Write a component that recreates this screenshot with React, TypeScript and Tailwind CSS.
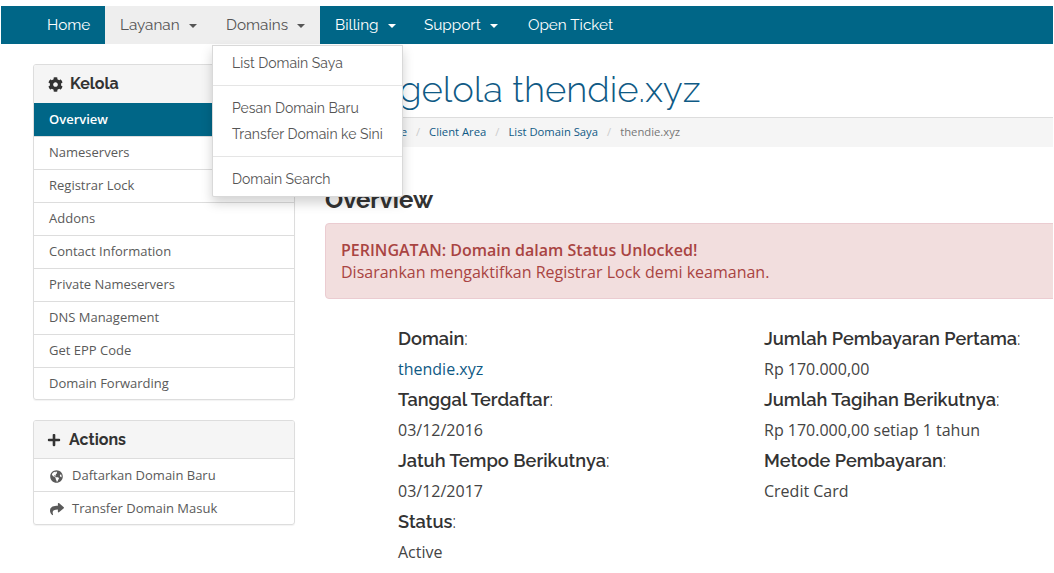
import { FaCog, FaGlobeAmericas, FaPlus, FaShare } from 'react-icons/fa';

const Caret = () => (
	<span className="ml-[9px] inline-block border-x-4 border-t-4 border-x-transparent border-t-current align-middle" />
);

const manageLinks = [
	'Nameservers',
	'Registrar Lock',
	'Addons',
	'Contact Information',
	'Private Nameservers',
	'DNS Management',
	'Get EPP Code',
	'Domain Forwarding',
];

const leftDetails = [
	['Domain', 'thendie.xyz'],
	['Tanggal Terdaftar', '03/12/2016'],
	['Jatuh Tempo Berikutnya', '03/12/2017'],
	['Status', 'Active'],
];

const rightDetails = [
	['Jumlah Pembayaran Pertama', 'Rp 170.000,00'],
	['Jumlah Tagihan Berikutnya', 'Rp 170.000,00 setiap 1 tahun'],
	['Metode Pembayaran', 'Credit Card'],
];

const heading = "font-['Raleway','Lato','Liberation_Sans',sans-serif]";

const Details = ({ rows }: { rows: string[][] }) => (
	<div className="flex flex-col">
		{rows.map(([label, value]) => (
			<div key={label}>
				<div className={`${heading} h-[30px] text-[18.2px] leading-[30px] font-semibold text-[#333]`}>
					{label}
					<span className="font-normal">:</span>
				</div>
				<div
					className={`h-[31px] text-[16px] leading-[31px] ${label === 'Domain' ? 'text-[#0f5a85]' : 'text-[#444]'}`}
				>
					{value}
				</div>
			</div>
		))}
	</div>
);

const App = () => {
	return (
		<div className="relative h-[573px] w-[1053px] overflow-hidden bg-white pt-[6px] font-['Open_Sans',sans-serif] text-[#333]">
			<nav className={`${heading} ml-[1px] flex h-[38px] w-[1052px] bg-[#006687] pl-[31px] text-[15.3px] leading-[38px] text-white`}>
				<a className="w-[73px] pl-[15px]">Home</a>
				<a className="w-[106px] bg-[#eeeeee] pl-[15px] text-[#555]">
					Layanan
					<Caret />
				</a>
				<a className="w-[109px] bg-[#eeeeee] pl-[15px] text-[#555]">
					Domains
					<Caret />
				</a>
				<a className="w-[89px] pl-[15px]">
					Billing
					<Caret />
				</a>
				<a className="w-[104px] pl-[15px]">
					Support
					<Caret />
				</a>
				<a className="pl-[15px]">Open Ticket</a>
			</nav>

			<div className="flex pt-[20px] pl-[33px]">
				<aside className="flex w-[262px] shrink-0 flex-col gap-[20px] text-[13px] text-[#5a5a5a]">
					<div className="overflow-hidden rounded-[3px] border border-[#ddd] shadow-[0_1px_1px_rgba(0,0,0,0.05)]">
						<div className={`${heading} flex h-[38px] items-center gap-[7px] bg-[#f5f5f5] pl-[14px] text-[16px] font-bold text-[#333]`}>
							<FaCog size={15} />
							Kelola
						</div>
						<div className="flex h-[33px] items-center bg-[#006687] pl-[15px] font-semibold text-white">Overview</div>
						{manageLinks.map((link) => (
							<div key={link} className="flex h-[33px] items-center border-t border-[#ddd] pl-[15px] last:h-[32px]">
								{link}
							</div>
						))}
					</div>
					<div className="overflow-hidden rounded-[3px] border border-[#ddd] shadow-[0_1px_1px_rgba(0,0,0,0.05)]">
						<div className={`${heading} flex h-[37px] items-center gap-[8px] bg-[#f5f5f5] pl-[13px] text-[16px] font-bold text-[#333]`}>
							<FaPlus size={14} />
							Actions
						</div>
						<div className="flex h-[33px] items-center gap-[9px] border-t border-[#ddd] pt-[2px] pl-[16px]">
							<FaGlobeAmericas size={13} />
							Daftarkan Domain Baru
						</div>
						<div className="flex h-[33px] items-center gap-[8px] border-t border-[#ddd] pt-[2px] pl-[16px]">
							<FaShare size={14} />
							Transfer Domain Masuk
						</div>
					</div>
				</aside>

				<main className="mt-[1px] ml-[30px] w-[760px] shrink-0">
					<h1 className={`${heading} h-[52px] text-[36.5px] leading-[50px] font-light text-[#0f5a85]`}>
						Mengelola thendie.xyz
					</h1>
					<div className="flex h-[30px] items-center gap-[9px] border-t border-[#ddd] bg-[#f5f5f5] pl-[16px] text-[11.25px]">
						<span className="text-[#0f5a85]">Portal Home</span>
						<span className="text-[#ccc]">/</span>
						<span className="text-[#0f5a85]">Client Area</span>
						<span className="text-[#ccc]">/</span>
						<span className="text-[#0f5a85]">List Domain Saya</span>
						<span className="text-[#ccc]">/</span>
						<span className="text-[#777]">thendie.xyz</span>
					</div>
					<h2 className={`${heading} mt-[39px] h-[37px] text-[24px] leading-[28px] font-bold text-[#333]`}>Overview</h2>
					<div className="h-[76px] rounded-[4px] border border-[#ebccd1] bg-[#f2dede] px-[15px] pt-[15px] text-[16px] leading-[22px] text-[#a94442]">
						<div className="font-semibold">PERINGATAN: Domain dalam Status Unlocked!</div>
						<div>Disarankan mengaktifkan Registrar Lock demi keamanan.</div>
					</div>
					<div className="mt-[25px] grid grid-cols-[366px_1fr] pl-[73px]">
						<Details rows={leftDetails} />
						<Details rows={rightDetails} />
					</div>
				</main>
			</div>

			<div className={`${heading} absolute top-[45px] left-[212px] h-[152px] w-[191px] rounded-b-[2px] border border-black/15 bg-white pt-[5px] text-[14px] text-[#555] shadow-[0_6px_12px_rgba(0,0,0,0.175)]`}>
				<div className="pl-[19px] leading-[24px]">List Domain Saya</div>
				<div className="mt-[10px] mb-[9px] h-px bg-[#e5e5e5]" />
				<div className="pl-[19px] leading-[26px]">Pesan Domain Baru</div>
				<div className="pl-[19px] leading-[26px]">Transfer Domain ke Sini</div>
				<div className="mt-[9px] mb-[9px] h-px bg-[#e5e5e5]" />
				<div className="pl-[19px] leading-[26px]">Domain Search</div>
			</div>
		</div>
	);
};

export default App;
